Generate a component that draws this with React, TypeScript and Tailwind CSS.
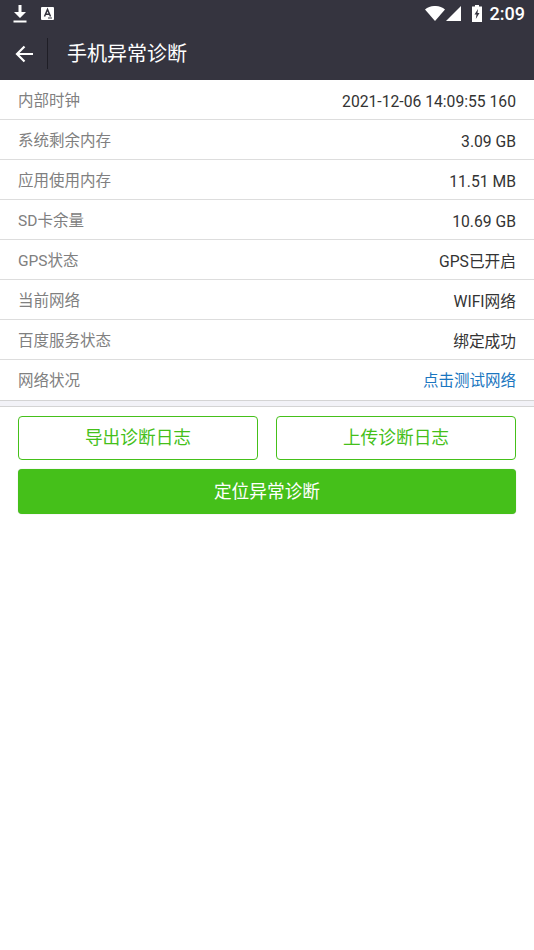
const rows = [
  { label: '内部时钟', value: '2021-12-06 14:09:55 160' },
  { label: '系统剩余内存', value: '3.09 GB' },
  { label: '应用使用内存', value: '11.51 MB' },
  { label: 'SD卡余量', value: '10.69 GB' },
  { label: 'GPS状态', value: 'GPS已开启' },
  { label: '当前网络', value: 'WIFI网络' },
  { label: '百度服务状态', value: '绑定成功' },
];

export default function App() {
  return (
    <div className="flex h-[950px] w-[534px] flex-col bg-white font-['Roboto','Noto_Sans_CJK_SC',sans-serif]">
      {/* Status bar */}
      <div className="flex h-[27px] items-center justify-between bg-[#35343f] pl-[13px] pr-[9px] text-white">
        <div className="flex items-center gap-[14px]">
          <svg width="14" height="18" viewBox="0 0 14 18" fill="white">
            <path d="M5.5 0h3v7H13L7 13 1 7h4.5z" />
            <rect x="0.5" y="15.5" width="13" height="2" />
          </svg>
          <svg width="13" height="13" viewBox="0 0 13 13">
            <rect width="13" height="13" rx="1" fill="white" />
            <path d="M3.5 9.500 6.500 2.500 9.500 9.500M4.500 7.200h4" stroke="#35343f" strokeWidth="1.5" fill="none" />
            <rect x="7" y="10.500" width="4" height="1" fill="#35343f" />
          </svg>
        </div>
        <div className="flex items-center">
          <svg width="20" height="15" viewBox="0 0 20 15" fill="white">
            <path d="M0 3.500C5.500-1.200 14.500-1.200 20 3.500L10 15z" />
          </svg>
          <svg className="ml-[1px]" width="15" height="15" viewBox="0 0 15 15" fill="white">
            <path d="M15 0v15H0z" />
          </svg>
          <svg className="ml-[11px]" width="10" height="17" viewBox="0 0 10 17">
            <path d="M3 0h4v1.500h3V17H0V1.500h3z" fill="white" />
            <path d="M6 4 2.500 9.500h2L3.800 14 7.500 8h-2z" fill="#35343f" />
          </svg>
          <span className="ml-[8px] text-[18px] leading-none font-medium">2:09</span>
        </div>
      </div>

      {/* Title bar */}
      <div className="flex h-[53px] items-center bg-[#35343f] text-white">
        <div className="flex w-[47px] justify-center">
          <svg width="18" height="18" viewBox="0 0 18 18" fill="none" stroke="white" strokeWidth="2.2">
            <path d="M18 9H2M9.500 1.500 2 9l7.500 7.500" />
          </svg>
        </div>
        <div className="h-[31px] w-px bg-[#1f1e26]" />
        <div className="ml-[19px] text-[20px] leading-none">手机异常诊断</div>
      </div>

      {/* Info rows */}
      <div>
        {rows.map((row) => (
          <div key={row.label} className="flex h-10 items-center justify-between border-b border-[#dddddd] px-[18px] pt-[4px]">
            <span className="text-[15.5px] text-[#808080]">{row.label}</span>
            <span className="text-[15.7px] text-[#333333]">{row.value}</span>
          </div>
        ))}
        <div className="flex h-10 items-center justify-between px-[18px] pt-[4px]">
          <span className="text-[15.5px] text-[#808080]">网络状况</span>
          <span className="text-[15.5px] text-[#1a76c0]">点击测试网络</span>
        </div>
      </div>

      <div className="h-[7px] border-y border-[#d4d4d4] bg-[#f2f2f7]" />

      {/* Actions */}
      <div className="flex flex-col gap-[9px] px-[18px] pt-[9px]">
        <div className="flex gap-[18px]">
          <button className="h-11 flex-1 rounded-[4px] border-[1.5px] border-[#45c01a] bg-white pt-[1px] text-[17.7px] text-[#45c01a]">导出诊断日志</button>
          <button className="h-11 flex-1 rounded-[4px] border-[1.5px] border-[#45c01a] bg-white pt-[1px] text-[17.7px] text-[#45c01a]">上传诊断日志</button>
        </div>
        <button className="h-[45px] rounded-[4px] bg-[#45c01a] pt-[1px] text-[17.7px] text-white shadow-[0_0_1px_rgba(0,0,0,0.3)]">定位异常诊断</button>
      </div>
    </div>
  );
}
